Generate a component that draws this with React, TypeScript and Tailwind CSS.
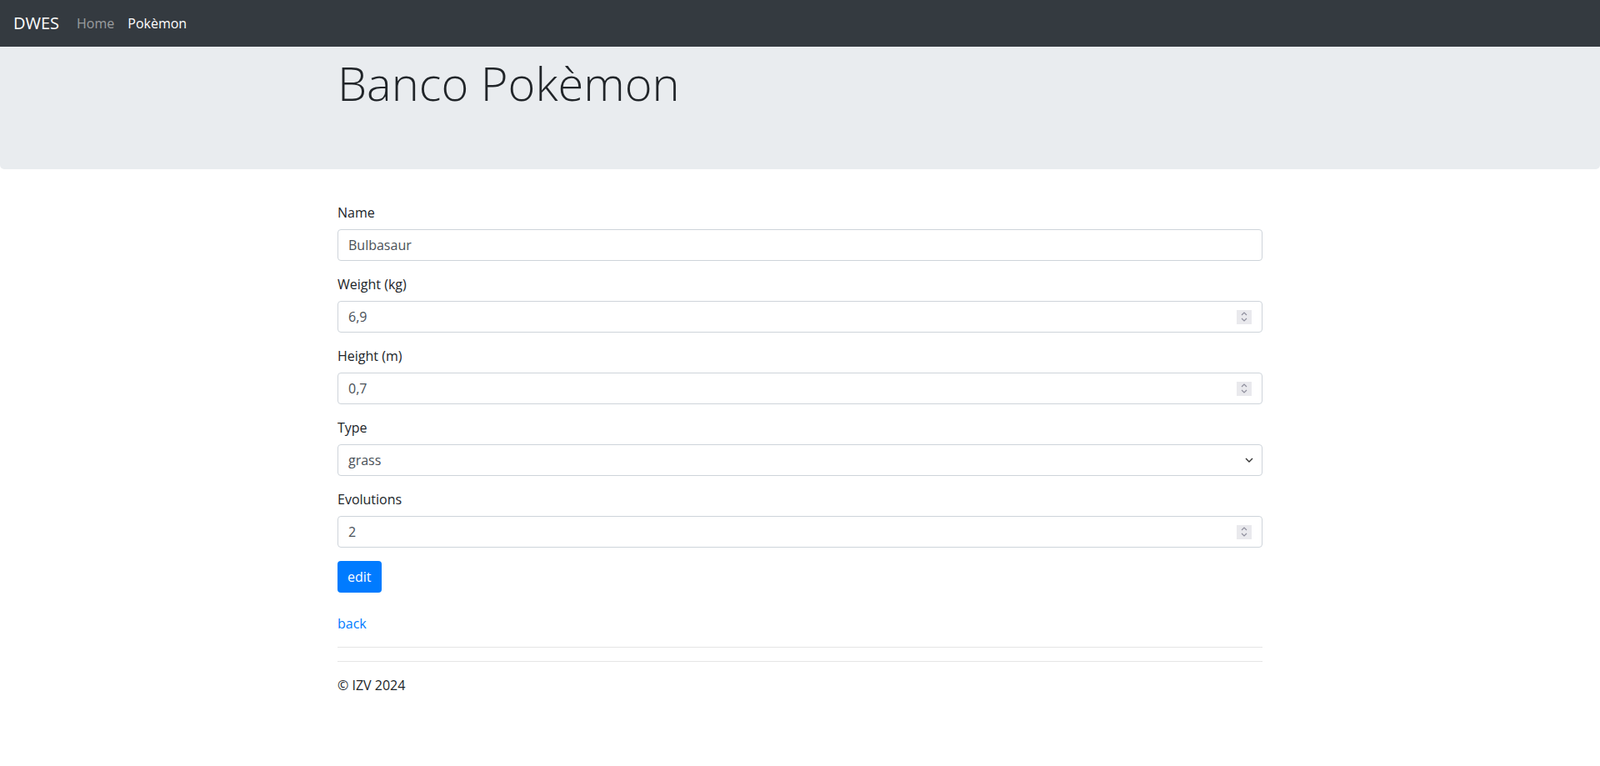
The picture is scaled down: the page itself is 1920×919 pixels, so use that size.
import { useState } from "react"

const font = { fontFamily: '"Open Sans", "Liberation Sans", sans-serif' }

function Spinner() {
    return (
        <div className="flex h-[17px] w-[18px] flex-col items-center justify-center gap-[2px] bg-[#e9e9ed]">
            <svg width="8" height="5" viewBox="0 0 8 5" fill="none">
                <path d="M1 4L4 1L7 4" stroke="#8f8f9d" strokeWidth="1.2" />
            </svg>
            <svg width="8" height="5" viewBox="0 0 8 5" fill="none">
                <path d="M1 1L4 4L7 1" stroke="#8f8f9d" strokeWidth="1.2" />
            </svg>
        </div>
    )
}

function Field({ label, value, number }: { label: string; value: string; number?: boolean }) {
    const [val, setVal] = useState(value)
    return (
        <div className="mb-4">
            <label className="mb-2 block text-[16px] leading-6 text-[#212529]">{label}</label>
            <div className="flex h-[38px] items-center rounded-[4px] border border-[#ced4da] bg-white pl-3 pr-[12px]">
                <input
                    value={val}
                    onChange={(e) => setVal(e.target.value)}
                    className="min-w-0 flex-1 bg-transparent text-[16px] leading-6 text-[#495057] outline-none"
                    style={font}
                />
                {number && <Spinner />}
            </div>
        </div>
    )
}

export default function App() {
    const [type, setType] = useState("grass")

    return (
        <div className="min-h-screen bg-white text-[#212529]" style={font}>
            <nav className="flex h-14 items-center bg-[#343a40] px-4">
                <a className="mr-[13px] text-[20px] leading-[30px] text-white">DWES</a>
                <a className="px-2 text-[16px] leading-6 text-white/50">Home</a>
                <a className="px-2 text-[16px] leading-6 text-white">Pokèmon</a>
            </nav>

            <div className="h-[147px] rounded-b-[5px] bg-[#e9ecef] pt-[10px]">
                <div className="mx-auto w-[1110px]">
                    <h1 className="text-[56px] font-light leading-[1.2] text-[#212529]">Banco Pokèmon</h1>
                </div>
            </div>

            <div className="mx-auto w-[1110px] pt-10">
                <form onSubmit={(e) => e.preventDefault()}>
                    <Field label="Name" value="Bulbasaur" />
                    <Field label="Weight (kg)" value="6,9" number />
                    <Field label="Height (m)" value="0,7" number />

                    <div className="mb-4">
                        <label className="mb-2 block text-[16px] leading-6">Type</label>
                        <div className="flex h-[38px] items-center rounded-[4px] border border-[#ced4da] bg-white pl-3 pr-[10px]">
                            <select
                                value={type}
                                onChange={(e) => setType(e.target.value)}
                                className="min-w-0 flex-1 appearance-none bg-transparent text-[16px] leading-6 text-[#495057] outline-none"
                                style={font}
                            >
                                <option value="grass">grass</option>
                                <option value="fire">fire</option>
                                <option value="water">water</option>
                            </select>
                            <svg width="10" height="6" viewBox="0 0 10 6" fill="none">
                                <path d="M1 1L5 5L9 1" stroke="#333" strokeWidth="1.4" />
                            </svg>
                        </div>
                    </div>

                    <Field label="Evolutions" value="2" number />

                    <button
                        type="submit"
                        className="h-[38px] rounded-[4px] bg-[#007bff] px-3 text-[16px] leading-6 text-white"
                        style={font}
                    >
                        edit
                    </button>
                </form>

                <a href="#" className="mt-[25px] block text-[16px] leading-6 text-[#007bff]">
                    back
                </a>

                <hr className="mt-4 border-t border-black/10" />
                <hr className="mt-4 border-t border-black/10" />

                <footer className="mt-4">
                    <p className="text-[16px] leading-6">© IZV 2024</p>
                </footer>
            </div>
        </div>
    )
}
